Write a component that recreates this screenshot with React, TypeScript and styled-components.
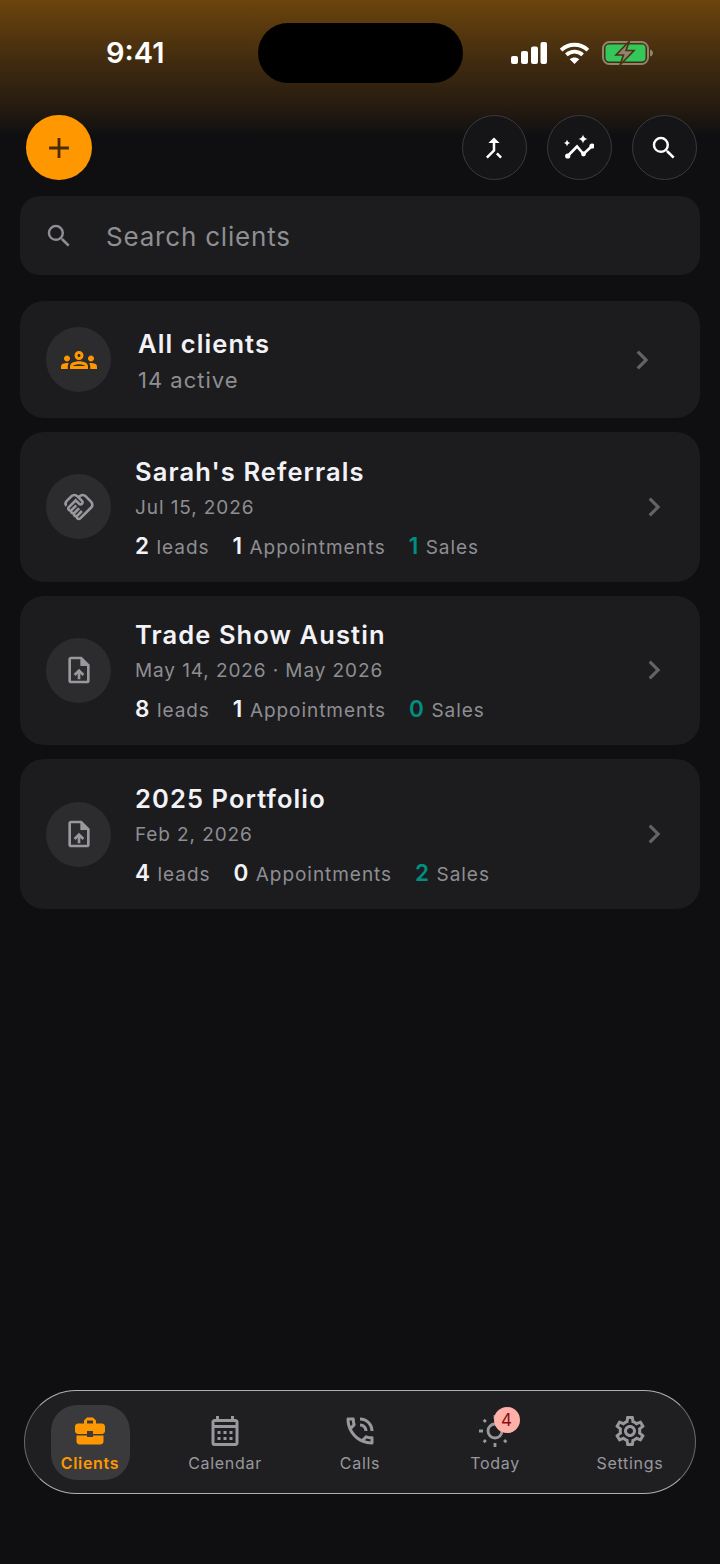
import React from "react";
import styled, { createGlobalStyle } from "styled-components";
import {
  MdAdd, MdCallMerge, MdSearch, MdOutlineGroups, MdOutlineHandshake,
  MdOutlineUploadFile, MdBusinessCenter, MdOutlineCalendarMonth, MdOutlinePhoneInTalk,
  MdOutlineSettings, MdChevronRight,
} from "react-icons/md";

const Global = createGlobalStyle`
  html, body { margin: 0; padding: 0; background: #0f0f11; }
  * { box-sizing: border-box; }
`;

const Page = styled.div`
  width: 720px;
  height: 1564px;
  display: flex;
  flex-direction: column;
  font-family: Inter, "Liberation Sans", sans-serif;
  background: linear-gradient(180deg, #6c440d 0, #3f2a0f 64px, #241a10 110px, #0f0f11 136px);
`;

const StatusBar = styled.div`
  height: 115px;
  flex: none;
  display: flex;
  align-items: flex-start;
  padding: 23px 0 0 106px;
`;

const Time = styled.div`
  margin-top: 12px;
  font-size: 29px;
  line-height: 36px;
  font-weight: 600;
  color: #fff;
  width: 60px;
  white-space: nowrap;
`;

const Island = styled.div`
  width: 205px;
  height: 60px;
  border-radius: 30px;
  background: #000;
  margin-left: 92px;
`;

const Indicators = styled.div`
  display: flex;
  align-items: center;
  gap: 12px;
  margin: 18px 0 0 48px;
`;

const Header = styled.div`
  display: flex;
  align-items: center;
  justify-content: space-between;
  padding: 0 23.5px 0 26px;
  height: 65px;
  flex: none;
`;

const AddButton = styled.div`
  width: 65.5px;
  height: 65px;
  border-radius: 50%;
  background: #ff9800;
  display: flex;
  align-items: center;
  justify-content: center;
  color: #4a2c04;
  font-size: 34px;
`;

const HeaderActions = styled.div`
  display: flex;
  gap: 20px;
`;

const RoundButton = styled.div`
  width: 65px;
  height: 65px;
  border-radius: 50%;
  background: #151517;
  border: 1.5px solid #3a3a3c;
  display: flex;
  align-items: center;
  justify-content: center;
  color: #fff;
  font-size: 30px;
`;

const Content = styled.div`
  flex: 1;
  display: flex;
  flex-direction: column;
  padding: 16px 20px 0;
`;

const SearchBox = styled.div`
  height: 79px;
  border-radius: 20px;
  background: #1c1c1e;
  display: flex;
  align-items: center;
  padding-left: 24px;
  color: #8e8e93;
  font-size: 30px;
  margin-bottom: 26px;
`;

const SearchLabel = styled.span`
  margin-left: 32px;
  padding-top: 2px;
  font-size: 26px;
  letter-spacing: 0.8px;
  color: #8e8e93;
`;

const CardList = styled.div`
  display: flex;
  flex-direction: column;
  gap: 14px;
`;

const Card = styled.div<{ $h: number }>`
  height: ${(p) => p.$h}px;
  border-radius: 24px;
  background: #1c1c1e;
  display: flex;
  align-items: center;
  padding-left: 26px;
`;

const IconCircle = styled.div<{ $accent?: boolean }>`
  width: 65px;
  height: 65px;
  flex: none;
  border-radius: 50%;
  background: #2c2c2e;
  display: flex;
  align-items: center;
  justify-content: center;
  color: ${(p) => (p.$accent ? "#ff9800" : "#98989d")};
  font-size: ${(p) => (p.$accent ? 36 : 32)}px;
`;

const CardBody = styled.div<{ $left: number; $top: number }>`
  flex: 1;
  margin-left: ${(p) => p.$left}px;
  padding-top: ${(p) => p.$top}px;
  display: flex;
  flex-direction: column;
`;

const Title = styled.div`
  font-size: 25.5px;
  line-height: 32px;
  font-weight: 600;
  letter-spacing: 1.1px;
  color: #f2f2f7;
`;

const Sub = styled.div<{ $mt: number; $size: number }>`
  font-size: ${(p) => p.$size}px;
  line-height: 28px;
  letter-spacing: ${(p) => (p.$size > 20 ? 1 : 0.9)}px;
  color: #8e8e93;
  margin-top: ${(p) => p.$mt}px;
`;

const Stats = styled.div`
  display: flex;
  align-items: baseline;
  gap: 23px;
  margin-top: 10px;
  height: 28px;
`;

const Stat = styled.div`
  display: flex;
  align-items: baseline;
  gap: 7.5px;
`;

const StatNum = styled.span<{ $teal?: boolean }>`
  font-size: 22.5px;
  font-weight: 600;
  color: ${(p) => (p.$teal ? "#008f80" : "#f2f2f7")};
`;

const StatLabel = styled.span`
  font-size: 19px;
  letter-spacing: 0.95px;
  color: #8e8e93;
`;

const Chevron = styled.div<{ $right: number }>`
  color: #636366;
  font-size: 38px;
  display: flex;
  margin-right: ${(p) => p.$right}px;
`;

const NavWrap = styled.div`
  flex: none;
  padding: 0 24px 70px;
`;

const Nav = styled.div`
  height: 104px;
  border-radius: 52px;
  background: #1f1f21;
  border: 1.5px solid #b0b0b2;
  border-left-color: #6a6a6c;
  border-right-color: #6a6a6c;
  display: grid;
  grid-template-columns: repeat(5, 135px);
  justify-content: center;
  align-items: center;
`;

const NavItem = styled.div<{ $active?: boolean }>`
  position: relative;
  justify-self: center;
  width: 79px;
  height: 75px;
  border-radius: 26px;
  background: ${(p) => (p.$active ? "#3a3a3c" : "transparent")};
  color: ${(p) => (p.$active ? "#ff9800" : "#98989d")};
  display: flex;
  flex-direction: column;
  align-items: center;
  justify-content: flex-start;
  padding-top: 8px;
`;

const NavIcon = styled.div`
  font-size: 36px;
  height: 36px;
  display: flex;
  align-items: center;
`;

const NavLabel = styled.div<{ $active?: boolean }>`
  font-size: 16px;
  line-height: 22px;
  margin-top: 3px;
  letter-spacing: 0.7px;
  font-weight: ${(p) => (p.$active ? 600 : 400)};
  white-space: nowrap;
`;

const Badge = styled.div`
  position: absolute;
  top: 2px;
  left: 38px;
  width: 26px;
  height: 26px;
  border-radius: 50%;
  background: #ffb0a8;
  color: #8c0f0f;
  font-size: 17px;
  line-height: 26px;
  text-align: center;
`;

const Signal = () => (
  <svg width="36" height="22" viewBox="0 0 36 22" fill="#fff">
    <rect x="0" y="14" width="7" height="8" rx="2" />
    <rect x="10" y="9" width="7" height="13" rx="2" />
    <rect x="20" y="4.5" width="7" height="17.5" rx="2" />
    <rect x="29.5" y="0" width="6.5" height="22" rx="2" />
  </svg>
);

const Wifi = () => (
  <svg width="31" height="22" viewBox="0 0 32 23" fill="none" stroke="#fff" strokeWidth="4">
    <path d="M2 8.5C10 1 22 1 30 8.5" />
    <path d="M7.5 13.5C12.5 9 19.5 9 24.5 13.5" />
    <path d="M16 23L11 18C14 15.5 18 15.5 21 18Z" fill="#fff" stroke="none" />
  </svg>
);

const Battery = () => (
  <svg width="51" height="24" viewBox="0 0 51 24">
    <rect x="1" y="1" width="45" height="22" rx="6.5" fill="none" stroke="#8f8470" strokeWidth="2" />
    <rect x="3.5" y="3.5" width="40" height="17" rx="4" fill="#34c759" />
    <path d="M48 8.5c2 .5 3 2 3 3.5s-1 3-3 3.5z" fill="#8f8470" />
    <path d="M27.5 0L14 14h7.5L18 24 32 9.5h-8z" fill="#8f8470" stroke="#4a3210" strokeWidth="1.6" />
  </svg>
);

const Sparkle = ({ x, y, r }: { x: number; y: number; r: number }) => (
  <path
    d={`M${x} ${y - r}Q${x + r * 0.15} ${y - r * 0.15} ${x + r} ${y}Q${x + r * 0.15} ${y + r * 0.15} ${x} ${y + r}Q${x - r * 0.15} ${y + r * 0.15} ${x - r} ${y}Q${x - r * 0.15} ${y - r * 0.15} ${x} ${y - r}Z`}
    fill="#fff"
  />
);

const GraphSpark = () => (
  <svg width="30" height="30" viewBox="0 0 30 30" fill="none">
    <path d="M3.7 23L13 13.5L19.5 21L28 13" stroke="#fff" strokeWidth="2.6" />
    <circle cx="3.7" cy="23" r="2.6" fill="#fff" />
    <circle cx="19.5" cy="21" r="2.4" fill="#fff" />
    <circle cx="28" cy="13" r="2.6" fill="#fff" />
    <Sparkle x={3} y={10} r={3.2} />
    <Sparkle x={19} y={6} r={4.6} />
  </svg>
);

const Sun = () => (
  <svg width="36" height="36" viewBox="0 0 36 36" fill="none" stroke="currentColor" strokeWidth="2.8">
    <circle cx="18" cy="18" r="7" />
    <path d="M18 2v4M18 30v4M2 18h4M30 18h4M6.7 6.7l2.2 2.2M27.1 27.1l2.2 2.2M6.7 29.3l2.2-2.2M27.1 8.9l2.2-2.2" />
  </svg>
);

const cards = [
  { title: "Sarah's Referrals", sub: "Jul 15, 2026", leads: 2, appts: 1, sales: 1, icon: <MdOutlineHandshake /> },
  { title: "Trade Show Austin", sub: "May 14, 2026 · May 2026", leads: 8, appts: 1, sales: 0, icon: <MdOutlineUploadFile /> },
  { title: "2025 Portfolio", sub: "Feb 2, 2026", leads: 4, appts: 0, sales: 2, icon: <MdOutlineUploadFile /> },
];

const tabs = [
  { label: "Clients", icon: <MdBusinessCenter />, active: true },
  { label: "Calendar", icon: <MdOutlineCalendarMonth /> },
  { label: "Calls", icon: <MdOutlinePhoneInTalk /> },
  { label: "Today", icon: <Sun />, badge: 4 },
  { label: "Settings", icon: <MdOutlineSettings /> },
];

export default function App() {
  return (
    <Page>
      <Global />
      <StatusBar>
        <Time>9:41</Time>
        <Island />
        <Indicators>
          <Signal />
          <Wifi />
          <Battery />
        </Indicators>
      </StatusBar>
      <Header>
        <AddButton><MdAdd /></AddButton>
        <HeaderActions>
          <RoundButton><MdCallMerge /></RoundButton>
          <RoundButton><GraphSpark /></RoundButton>
          <RoundButton><MdSearch /></RoundButton>
        </HeaderActions>
      </Header>
      <Content>
        <SearchBox>
          <MdSearch />
          <SearchLabel>Search clients</SearchLabel>
        </SearchBox>
        <CardList>
          <Card $h={117}>
            <IconCircle $accent><MdOutlineGroups /></IconCircle>
            <CardBody $left={27} $top={2}>
              <Title>All clients</Title>
              <Sub $mt={6} $size={22}>14 active</Sub>
            </CardBody>
            <Chevron $right={39}><MdChevronRight /></Chevron>
          </Card>
          {cards.map((c) => (
            <Card $h={149.67} key={c.title}>
              <IconCircle>{c.icon}</IconCircle>
              <CardBody $left={24} $top={2}>
                <Title>{c.title}</Title>
                <Sub $mt={6} $size={19}>{c.sub}</Sub>
                <Stats>
                  <Stat><StatNum>{c.leads}</StatNum><StatLabel>leads</StatLabel></Stat>
                  <Stat><StatNum>{c.appts}</StatNum><StatLabel>Appointments</StatLabel></Stat>
                  <Stat><StatNum $teal>{c.sales}</StatNum><StatLabel>Sales</StatLabel></Stat>
                </Stats>
              </CardBody>
              <Chevron $right={27}><MdChevronRight /></Chevron>
            </Card>
          ))}
        </CardList>
      </Content>
      <NavWrap>
        <Nav>
          {tabs.map((t) => (
            <NavItem key={t.label} $active={t.active}>
              <NavIcon>{t.icon}</NavIcon>
              <NavLabel $active={t.active}>{t.label}</NavLabel>
              {t.badge ? <Badge>{t.badge}</Badge> : null}
            </NavItem>
          ))}
        </Nav>
      </NavWrap>
    </Page>
  );
}
